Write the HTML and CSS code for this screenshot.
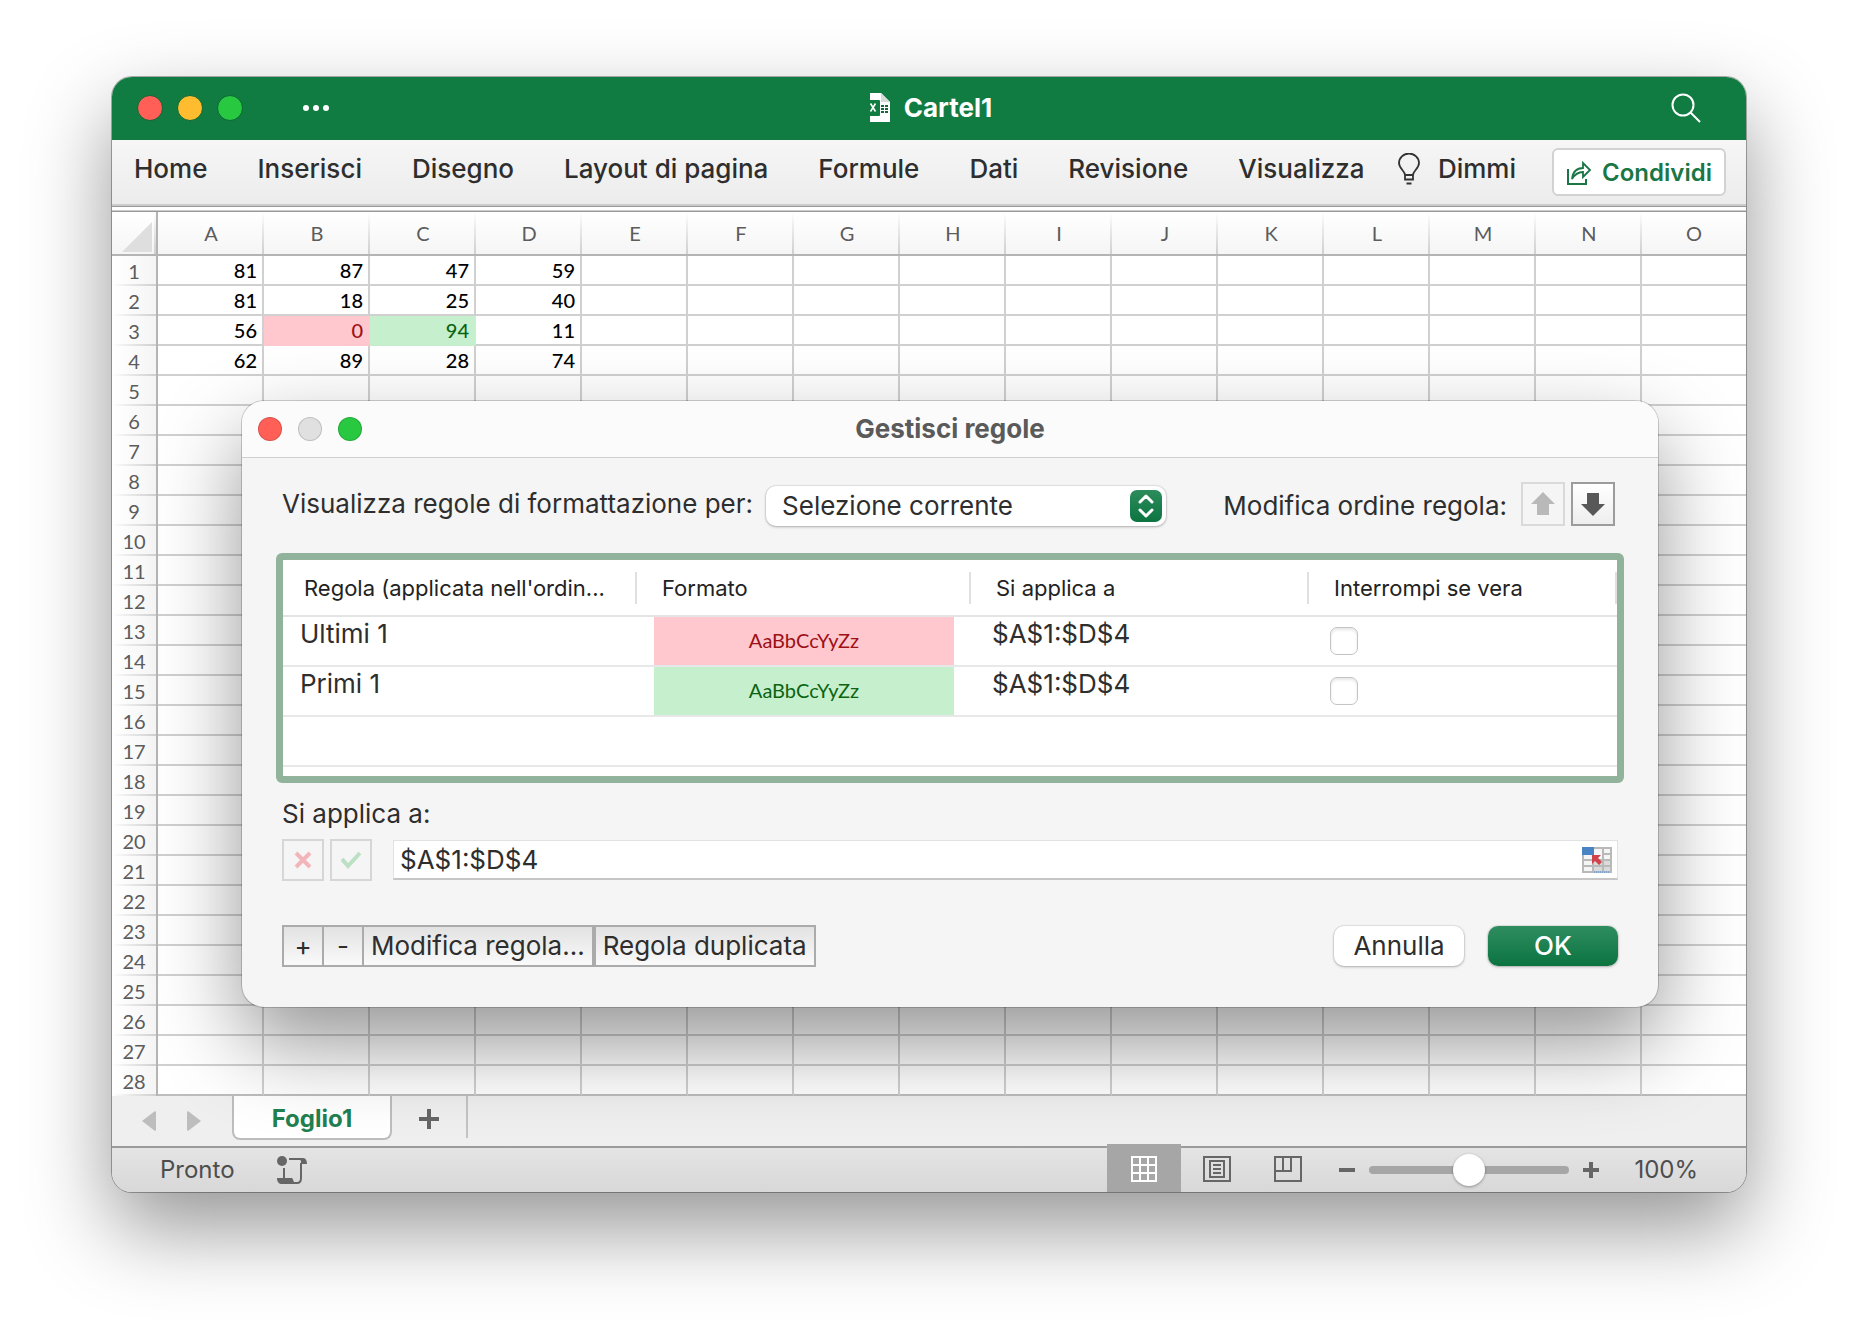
FILE: index.html
```html
<!DOCTYPE html>
<html lang="it">
<head>
<meta charset="utf-8">
<title>Cartel1</title>
<link rel="stylesheet" href="styles.css">
</head>
<body>
<main class="window">
  <header class="titlebar">
    <div class="titlebar-left">
      <div class="lights lights-main">
        <button class="light red" aria-label="Chiudi"></button>
        <button class="light yellow" aria-label="Riduci"></button>
        <button class="light green" aria-label="Ingrandisci"></button>
      </div>
      <button class="icon-button" aria-label="Altro">
        <svg width="28" height="8" viewBox="0 0 28 8" fill="#fff"><circle cx="4" cy="4" r="3"/><circle cx="14" cy="4" r="3"/><circle cx="24" cy="4" r="3"/></svg>
      </button>
    </div>
    <h1 class="doc-title">
      <svg width="26" height="32" viewBox="0 0 26 32">
        <path d="M4 1h11l9 9v20H4z" fill="#fff"/>
        <path d="M15 1l9 9h-9z" fill="#d5dbd7"/>
        <path d="M15 13h3v2h-3zM19 13h3v2h-3zM15 16h3v2h-3zM19 16h3v2h-3zM15 19h3v2h-3zM19 19h3v2h-3z" fill="#14683a"/>
        <rect x="0" y="8" width="14" height="16" rx="1" fill="#117c41"/>
        <path d="M4.500 11.500l5 8M9.500 11.500l-5 8" stroke="#fff" stroke-width="1.600"/>
      </svg>
      Cartel1
    </h1>
    <button class="icon-button search" aria-label="Cerca">
      <svg width="30" height="30" viewBox="0 0 30 30" fill="none" stroke="#fff" stroke-width="2"><circle cx="12" cy="12" r="10.500"/><path d="M19.500 19.500l9.500 9.500"/></svg>
    </button>
  </header>

  <nav class="ribbon">
    <div class="ribbon-tabs">
      <a href="#">Home</a>
      <a href="#">Inserisci</a>
      <a href="#">Disegno</a>
      <a href="#">Layout di pagina</a>
      <a href="#">Formule</a>
      <a href="#">Dati</a>
      <a href="#">Revisione</a>
      <a href="#">Visualizza</a>
    </div>
    <a class="tell-me" href="#">
      <svg width="22" height="32" viewBox="0 0 22 32" fill="none" stroke="#333" stroke-width="1.800"><path d="M7 22c0-4-6-6.500-6-12a10 9.500 0 0 1 20 0c0 5.500-6 8-6 12zM7 22v4.500h8V22M8.500 30.500h5"/></svg>
      Dimmi
    </a>
    <button class="share">
      <svg width="26" height="26" viewBox="0 0 26 26" fill="none" stroke="#1a7745" stroke-width="2"><path d="M2 9v15h18v-5"/><path d="M6 19c1-8 5-11 11-11V3l7 7-7 7v-5c-5 0-8 2-11 7z" stroke-width="1.800"/></svg>
      Condividi
    </button>
  </nav>
  <div class="divider"></div>

  <table class="sheet">
    <thead><tr id="columns"><th class="corner"><svg width="30" height="30" viewBox="0 0 30 30"><path d="M30 0v30H0z" fill="#dedede"/></svg></th></tr></thead>
    <tbody id="cells"></tbody>
  </table>

  <div class="tabbar">
    <button class="arrow" aria-label="Foglio precedente"><svg width="14" height="20" viewBox="0 0 14 20"><path d="M14 1v18l-1 1L0 10 13 0z" fill="#bdbdbd"/></svg></button>
    <button class="arrow" aria-label="Foglio successivo"><svg width="14" height="20" viewBox="0 0 14 20"><path d="M0 1v18l1 1 13-10L1 0z" fill="#bdbdbd"/></svg></button>
    <button class="sheet-tab">Foglio1</button>
    <button class="add-sheet" aria-label="Aggiungi foglio"><svg width="20" height="20" viewBox="0 0 20 20"><path d="M10 0v20M0 10h20" stroke="#666" stroke-width="4"/></svg></button>
  </div>

  <footer class="statusbar">
    <span class="ready">Pronto</span>
    <button class="icon-button script" aria-label="Macro">
      <svg width="30" height="28" viewBox="0 0 30 28" fill="none" stroke="#666" stroke-width="2"><circle cx="5" cy="5" r="5" fill="#666" stroke="none"/><path d="M7 12v10M12 3h14M24 7v15c0 3-1 5-4 5H6"/><path d="M22 2h4c3 0 4 3 4 6h-6c0-3 0-4-2-6zM0 22h15c1 0 1 4 4 6H5c-3 0-5-2-5-6z" fill="#666" stroke="none"/></svg>
    </button>
    <div class="views">
      <button class="view active" aria-label="Normale">
        <svg width="26" height="26" viewBox="0 0 26 26" fill="none" stroke="#fff" stroke-width="2"><path d="M1 1h24v24H1zM9 1v24M17 1v24M1 9h24M1 17h24"/></svg>
      </button>
      <button class="view" aria-label="Layout di pagina">
        <svg width="28" height="26" viewBox="0 0 28 26" fill="none" stroke="#666" stroke-width="2"><path d="M1 1h26v24H1zM7 5h14v16H7zM10 9h8M10 13h8M10 17h8"/></svg>
      </button>
      <button class="view" aria-label="Anteprima interruzioni">
        <svg width="28" height="26" viewBox="0 0 28 26" fill="none" stroke="#666" stroke-width="2"><path d="M1 1h26v24H1zM9 1v14M17 1v14M1 15h17"/></svg>
      </button>
    </div>
    <div class="zoom">
      <button class="icon-button" aria-label="Riduci zoom"><svg width="16" height="16" viewBox="0 0 16 16"><path d="M0 8h16" stroke="#666" stroke-width="4"/></svg></button>
      <input class="zoom-range" type="range" min="0" max="100" value="50" aria-label="Zoom">
      <button class="icon-button" aria-label="Aumenta zoom"><svg width="16" height="16" viewBox="0 0 16 16"><path d="M0 8h16M8 0v16" stroke="#666" stroke-width="4"/></svg></button>
    </div>
    <span class="zoom-value">100%</span>
  </footer>

  <section class="dialog" role="dialog" aria-labelledby="dialog-title">
    <header class="dialog-header">
      <div class="lights">
        <button class="light red" aria-label="Chiudi"></button>
        <button class="light gray" aria-label="Riduci"></button>
        <button class="light green" aria-label="Ingrandisci"></button>
      </div>
      <h2 id="dialog-title">Gestisci regole</h2>
    </header>
    <div class="dialog-body">
      <div class="filter-row">
        <label for="scope">Visualizza regole di formattazione per:</label>
        <div class="select-wrap">
          <select id="scope"><option>Selezione corrente</option></select>
          <span class="stepper"><svg width="16" height="24" viewBox="0 0 16 24" fill="none" stroke="#fff" stroke-width="3" stroke-linecap="round" stroke-linejoin="round"><path d="M2 8l6-6 6 6M2 16l6 6 6-6"/></svg></span>
        </div>
        <div class="reorder">
          <span>Modifica ordine regola:</span>
          <button class="move" disabled aria-label="Su"><svg width="24" height="24" viewBox="0 0 24 24"><path d="M12 0l12 12h-6v11H6V12H0z" fill="#b9b9b9"/></svg></button>
          <button class="move" aria-label="Giù"><svg width="24" height="24" viewBox="0 0 24 24"><path d="M12 24l12-12h-6V1H6v11H0z" fill="#585858"/></svg></button>
        </div>
      </div>

      <div class="rules-frame">
        <table class="rules">
          <colgroup><col class="col-rule"><col class="col-format"><col class="col-range"><col></colgroup>
          <thead><tr>
            <th><span>Regola (applicata nell'ordin...</span></th>
            <th><span>Formato</span></th>
            <th><span>Si applica a</span></th>
            <th><span>Interrompi se vera</span></th>
          </tr></thead>
          <tbody>
            <tr><td>Ultimi 1</td><td class="format"><div class="swatch bad">AaBbCcYyZz</div></td><td class="range">$A$1:$D$4</td><td class="stop"><input type="checkbox" aria-label="Interrompi se vera: Ultimi 1"></td></tr>
            <tr><td>Primi 1</td><td class="format"><div class="swatch good">AaBbCcYyZz</div></td><td class="range">$A$1:$D$4</td><td class="stop"><input type="checkbox" aria-label="Interrompi se vera: Primi 1"></td></tr>
            <tr><td></td><td></td><td></td><td></td></tr>
          </tbody>
        </table>
      </div>

      <label class="applies-label" for="applies">Si applica a:</label>
      <div class="applies-row">
        <button class="square" disabled aria-label="Annulla modifica"><svg width="18" height="18" viewBox="0 0 18 18"><path d="M2 2l14 14M16 2L2 16" stroke="#f2b6ba" stroke-width="4"/></svg></button>
        <button class="square" disabled aria-label="Conferma modifica"><svg width="20" height="18" viewBox="0 0 20 18" fill="none"><path d="M1 8l6 7L19 2" stroke="#bce0c4" stroke-width="4"/></svg></button>
        <div class="range-field">
          <input id="applies" type="text" value="$A$1:$D$4">
          <button class="icon-button" aria-label="Seleziona intervallo">
            <svg width="30" height="26" viewBox="0 0 30 26"><path d="M0 0h30v26H0z" fill="#b9b9b9"/><path d="M2 8h8v4H2zM2 14h8v4H2zM2 20h8v4H2zM12 2h8v10h-8zM22 2h6v4h-6zM22 8h6v4h-6z" fill="#f5f5f5"/><path d="M12 14h8v4h-8zM22 14h6v4h-6zM12 20h8v4h-8zM22 20h6v4h-6z" fill="#dadada"/><path d="M0 0h12v8H0z" fill="#4a83c4"/><path d="M10 8h9l-3 3 4 4-3 3-4-4-3 3z" fill="#d0434b"/><path d="M12 25h16" stroke="#4a90d9" stroke-dasharray="1 1"/></svg>
          </button>
        </div>
      </div>

      <div class="actions">
        <div class="segments">
          <button class="seg-small">+</button><button class="seg-small">-</button><button>Modifica regola...</button><button class="seg-last">Regola duplicata</button>
        </div>
        <button class="push">Annulla</button>
        <button class="push primary">OK</button>
      </div>
    </div>
  </section>
</main>
<script src="sheet.js"></script>
</body>
</html>
```
FILE: sheet.js
```js
const columns = 'ABCDEFGHIJKLMNO'.split('');
const values = [[81, 87, 47, 59], [81, 18, 25, 40], [56, 0, 94, 11], [62, 89, 28, 74]];
const flat = values.flat();
const low = Math.min(...flat);
const high = Math.max(...flat);

const head = document.getElementById('columns');
for (const name of columns) {
  const th = document.createElement('th');
  th.scope = 'col';
  th.textContent = name;
  head.append(th);
}

const body = document.getElementById('cells');
for (let r = 0; r < 28; r++) {
  const tr = document.createElement('tr');
  const th = document.createElement('th');
  th.scope = 'row';
  th.textContent = r + 1;
  tr.append(th);
  columns.forEach((_, c) => {
    const td = document.createElement('td');
    const value = values[r]?.[c];
    if (value !== undefined) {
      td.textContent = value;
      if (value === low) td.className = 'bad';
      if (value === high) td.className = 'good';
    }
    tr.append(td);
  });
  body.append(tr);
}
```
FILE: styles.css
```css
* { box-sizing: border-box; }

body {
  margin: 0;
  padding: 77px 112px 148px;
  background: #fff;
  color: #2e2e2e;
  font: 26px/32px Inter, sans-serif;
}

button, input, select { font: inherit; color: inherit; }
button { padding: 0; border: 0; background: none; }
svg { display: block; flex: none; }
h1, h2 { margin: 0; font-size: inherit; line-height: inherit; }
a { color: inherit; text-decoration: none; }

.window {
  position: relative;
  overflow: hidden;
  border-radius: 20px;
  background: #fff;
  box-shadow: 0 0 0 1px rgba(0, 0, 0, .3), 0 36px 84px rgba(0, 0, 0, .42);
}

/* Title bar */
.titlebar {
  display: grid;
  grid-template-columns: 1fr auto 1fr;
  align-items: center;
  height: 63px;
  padding: 0 25px 2px;
  background: #117c41;
  color: #fff;
}
.titlebar-left { display: flex; align-items: center; gap: 59px; }
.lights { display: flex; gap: 14px; }
.light { width: 26px; height: 26px; border-radius: 50%; border: 1px solid rgba(0, 0, 0, .15); }
.lights-main .light { border-color: #0d6635; }
.red { background: #ff5f57; }
.yellow { background: #febc2e; }
.green { background: #28c840; }
.gray { background: #e0e0e0; }
.doc-title { display: flex; align-items: center; gap: 12px; font-weight: 700; }
.search { justify-self: end; margin-right: 20px; }

/* Ribbon */
.ribbon {
  display: flex;
  align-items: center;
  height: 64px;
  padding: 0 20px 0 22px;
  background: linear-gradient(#f6f6f6, #ececec);
  font-weight: 500;
}
.ribbon-tabs { display: flex; gap: 50px; padding-bottom: 6px; white-space: nowrap; }
.tell-me { display: flex; align-items: center; gap: 18px; margin-left: auto; padding-bottom: 6px; }
.share {
  display: flex;
  align-items: center;
  justify-content: center;
  gap: 10px;
  width: 174px;
  height: 48px;
  margin-left: 36px;
  padding-top: 2px;
  border: 2px solid #d2d2d2;
  border-radius: 6px;
  background: #fff;
  color: #1a7745;
  font-weight: 600;
  font-size: 24px;
}
.divider {
  height: 8px;
  border-top: 2px solid #ccc;
  border-bottom: 1px solid #999;
  background: linear-gradient(#999 1px, #fff 1px, #fff 4px, #ccc 4px);
}

/* Grid */
.sheet {
  width: 100%;
  table-layout: fixed;
  border-collapse: separate;
  border-spacing: 0;
  font: 20px/28px Lato, sans-serif;
}
.sheet th { padding: 0; font-weight: 400; color: #5c5c5c; }
.sheet thead th {
  width: 106px;
  height: 44px;
  border-bottom: 2px solid #b4b4b4;
  background: linear-gradient(#fff0, #d0d0d0) right / 2px 100% no-repeat, linear-gradient(#fff, #f5f5f5);
}
.sheet thead th:last-child { width: auto; background: linear-gradient(#fff, #f5f5f5); }
.sheet thead .corner { width: 46px; padding: 8px 0 0 10px; border-right: 2px solid #b4b4b4; }
.sheet tbody th {
  height: 30px;
  border-right: 2px solid #b4b4b4;
  background: linear-gradient(90deg, #fff0, #d0d0d0) bottom / 100% 2px no-repeat, linear-gradient(90deg, #fff, #f5f5f5);
}
.sheet td {
  height: 30px;
  padding: 0 5px;
  border-right: 2px solid #d0d0d0;
  border-bottom: 2px solid #d0d0d0;
  text-align: right;
  font-weight: 500;
  color: #000;
}
.sheet td:last-child { border-right: 0; }
.sheet tbody tr:last-child > * { border-bottom-color: #bdbdbd; }
.sheet td.bad { border-color: #ffc7ce; }
.sheet td.good { border-color: #c6efce; }
.sheet .bad, .swatch.bad { background: #ffc7ce; color: #9c1016; }
.sheet .good, .swatch.good { background: #c6efce; color: #0b6410; }

/* Sheet tabs */
.tabbar {
  display: flex;
  align-items: flex-start;
  height: 52px;
  padding-left: 30px;
  border-bottom: 2px solid #9b9b9b;
  background: #efefef;
}
.arrow { margin: 15px 31px 0 0; }
.sheet-tab {
  width: 160px;
  height: 44px;
  padding-top: 4px;
  border: 2px solid #bdbdbd;
  border-top: 0;
  border-radius: 0 0 8px 8px;
  background: #fff;
  color: #1f8050;
  font-weight: 700;
  font-size: 24px;
}
.add-sheet { display: flex; align-items: center; justify-content: center; width: 76px; height: 42px; padding-top: 4px; border-right: 2px solid #c4c4c4; }

/* Status bar */
.statusbar {
  display: flex;
  align-items: center;
  height: 44px;
  padding: 0 48px;
  background: linear-gradient(#e4e4e4, #d8d8d8);
  color: #4d4d4d;
  font-size: 24px;
}
.script { margin-left: 42px; }
.views { display: flex; align-self: stretch; margin: -4px 0 0 auto; }
.view { display: flex; align-items: center; justify-content: center; width: 71px; padding-top: 2px; }
.view.active { width: 74px; background: #a6a6a6; }
.zoom { display: flex; align-items: center; gap: 14px; margin: 0 35px 0 16px; }
.zoom-range { appearance: none; width: 200px; height: 32px; margin: 0; background: none; }
.zoom-range::-webkit-slider-runnable-track { height: 8px; border-radius: 4px; background: #a6a6a6; }
.zoom-range::-webkit-slider-thumb {
  appearance: none;
  width: 32px;
  height: 32px;
  margin-top: -12px;
  border-radius: 50%;
  background: #fff;
  box-shadow: 0 1px 3px rgba(0, 0, 0, .35);
}

/* Rules dialog, floating over the sheet */
.dialog {
  position: absolute;
  top: 324px;
  left: 130px;
  right: 88px;
  border-radius: 22px;
  background: #f5f5f5;
  box-shadow: 0 0 0 1px rgba(0, 0, 0, .18), 0 36px 84px rgba(0, 0, 0, .42);
}
.dialog-header {
  display: grid;
  grid-template-columns: 1fr auto 1fr;
  align-items: center;
  height: 57px;
  padding: 0 16px;
  border-bottom: 1px solid #cfcfcf;
  border-radius: 22px 22px 0 0;
  background: #fbfbfb;
  color: #5a5a5a;
}
.dialog-header .light { width: 24px; height: 24px; }
.dialog-header .lights { gap: 16px; }
.dialog-body { padding: 24px 40px 40px; }

.filter-row { display: flex; align-items: center; margin-bottom: 27px; }
.select-wrap { display: grid; width: 400px; margin: 4px 0 0 13px; }
.select-wrap > * { grid-area: 1 / 1; }
.select-wrap select {
  appearance: none;
  width: 100%;
  height: 40px;
  padding: 0 16px;
  border: 0;
  border-radius: 10px;
  background: #fff;
  box-shadow: 0 0 0 1px rgba(0, 0, 0, .06), 0 1px 3px rgba(0, 0, 0, .25);
}
.stepper {
  display: flex;
  align-items: center;
  justify-content: center;
  place-self: center end;
  width: 32px;
  height: 32px;
  margin-right: 4px;
  border-radius: 7px;
  background: linear-gradient(#2c8c5c, #0c7440);
  pointer-events: none;
}
.reorder { display: flex; align-items: center; gap: 6px; margin-left: auto; padding-right: 3px; }
.reorder span { margin: 4px 8px 0 0; }
.move {
  display: flex;
  align-items: center;
  justify-content: center;
  width: 44px;
  height: 44px;
  border: 2px solid #9c9c9c;
  background: linear-gradient(#fff, #eee);
}
.move:disabled { border-color: #dadada; background: #f5f5f5; }

.rules-frame {
  margin: 0 -6px;
  height: 230px;
  border: 7px solid #91b39b;
  border-radius: 6px;
  background: #fff;
}
.rules { width: 100%; table-layout: fixed; border-collapse: separate; border-spacing: 0; }
.col-rule { width: 354px; }
.col-format { width: 334px; }
.col-range { width: 338px; }
.rules th { height: 57px; padding: 0; border-bottom: 2px solid #e4e4e4; color: #222; font-size: 22px; font-weight: 400; text-align: left; }
.rules th span { display: block; padding-left: 25px; border-right: 2px solid #e0e0e0; white-space: nowrap; }
.rules th:first-child span { padding-left: 21px; }
.rules td { height: 50px; padding: 1px 17px 0; border-bottom: 2px solid #e8e8e8; vertical-align: top; }
.rules td.format { padding: 0 17px; }
.rules td.range { padding-left: 21px; }
.rules td.stop { padding: 10px 21px 0; }
.swatch { height: 48px; font: 20px/46px Lato, sans-serif; text-align: center; }
.stop input {
  appearance: none;
  display: block;
  width: 28px;
  height: 28px;
  margin: 0;
  border: 1px solid #c4c4c4;
  border-radius: 7px;
  background: #fff;
  box-shadow: inset 0 2px 3px rgba(0, 0, 0, .1);
}

.applies-label { display: block; margin: 15px 0 9px; }
.applies-row { display: flex; align-items: center; gap: 6px; }
.square { display: flex; align-items: center; justify-content: center; width: 42px; height: 42px; border: 2px solid #d6d6d6; }
.range-field {
  display: flex;
  flex: 1;
  align-items: center;
  height: 40px;
  margin-left: 15px;
  padding: 0 5px 0 6px;
  border: 1px solid #e2e2e2;
  border-bottom: 2px solid #c6c6c6;
  background: #fff;
}
.range-field input { flex: 1; min-width: 0; padding: 0; border: 0; background: none; }

.actions { display: flex; align-items: center; gap: 24px; margin-top: 44px; }
.segments { display: flex; margin-right: auto; }
.segments button {
  height: 42px;
  padding: 0 7px;
  border: 2px solid #ababab;
  border-right: 0;
  background: linear-gradient(#e2e2e2, #fafafa);
}
.segments .seg-small { width: 40px; padding: 0; }
.segments .seg-last { border-left-width: 4px; border-right: 2px solid #ababab; }
.push {
  width: 130px;
  height: 40px;
  border-radius: 10px;
  background: #fff;
  box-shadow: 0 0 0 1px rgba(0, 0, 0, .06), 0 1px 3px rgba(0, 0, 0, .25);
}
.primary { background: linear-gradient(#2f8d60, #0b7340); color: #fff; font-weight: 500; }
```
